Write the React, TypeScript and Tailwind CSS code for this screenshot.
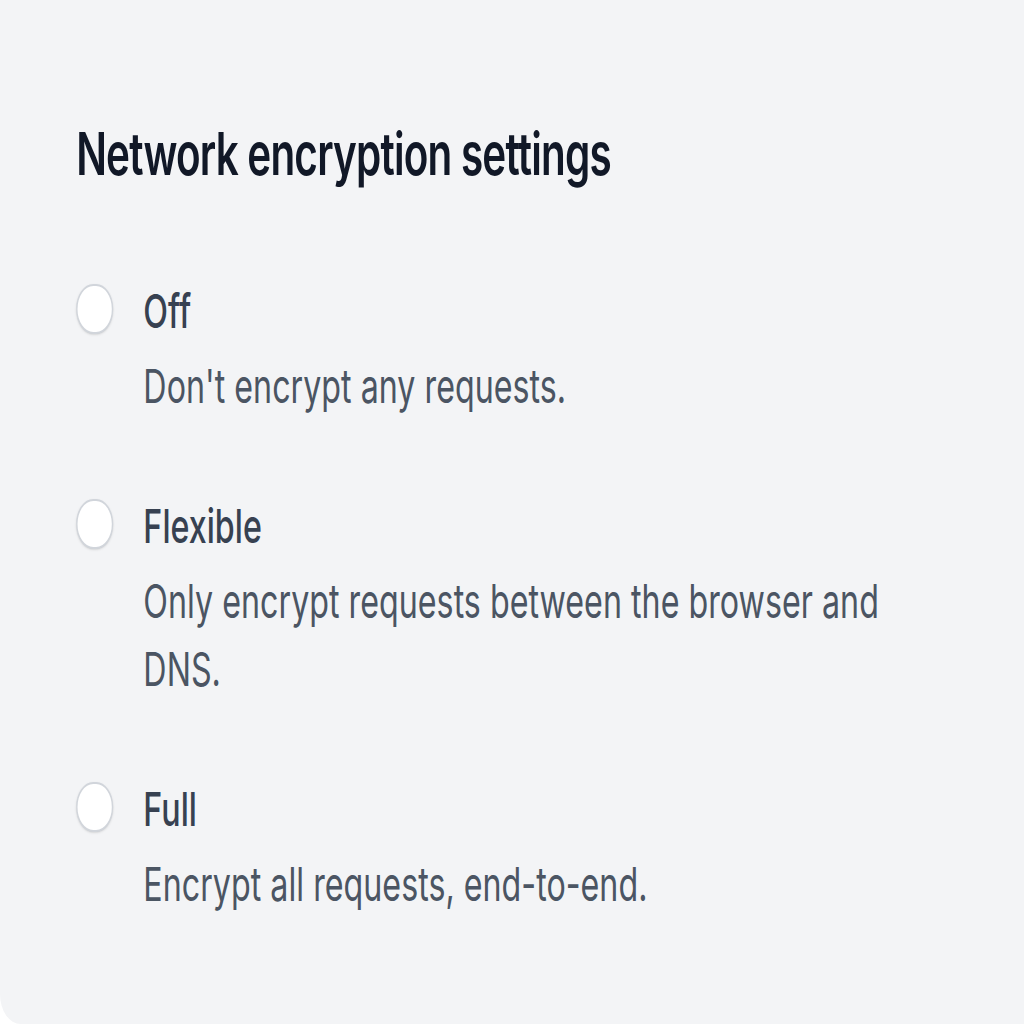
const options = [
  { id: 'off', label: 'Off', description: "Don't encrypt any requests." },
  {
    id: 'flexible',
    label: 'Flexible',
    description: 'Only encrypt requests between the browser and DNS.',
  },
  { id: 'full', label: 'Full', description: 'Encrypt all requests, end-to-end.' },
];

export default function App() {
  return (
    <div className="w-[1024px] h-[1024px] overflow-hidden bg-white">
      {/* the shot is squeezed sideways, so lay out wide and compress */}
      <div
        className="w-[1493px] h-[1024px] origin-top-left scale-x-[0.686] bg-[#f3f4f6] rounded-bl-[30px] pl-[111px] pr-[93px] pt-[106px]"
        style={{ fontFamily: 'Inter, "Noto Sans", sans-serif' }}
      >
        <h2 className="text-[59px] leading-[95px] font-semibold tracking-[-0.02em] text-[#111827]">
          Network encryption settings
        </h2>

        <fieldset className="mt-[76px] flex flex-col gap-[72px]">
          {options.map((opt) => (
            <label key={opt.id} className="flex items-start">
              <span className="mt-[7px] h-[50px] w-[54px] shrink-0 rounded-full border-2 border-[#d1d5db] bg-white shadow-sm" />
              <span className="ml-[44px] flex flex-col">
                <span className="text-[47px] leading-[67px] font-medium text-[#374151]">
                  {opt.label}
                </span>
                <span className="mt-[8px] text-[47px] leading-[68px] text-[#4b5563]">
                  {opt.description}
                </span>
              </span>
            </label>
          ))}
        </fieldset>
      </div>
    </div>
  );
}
